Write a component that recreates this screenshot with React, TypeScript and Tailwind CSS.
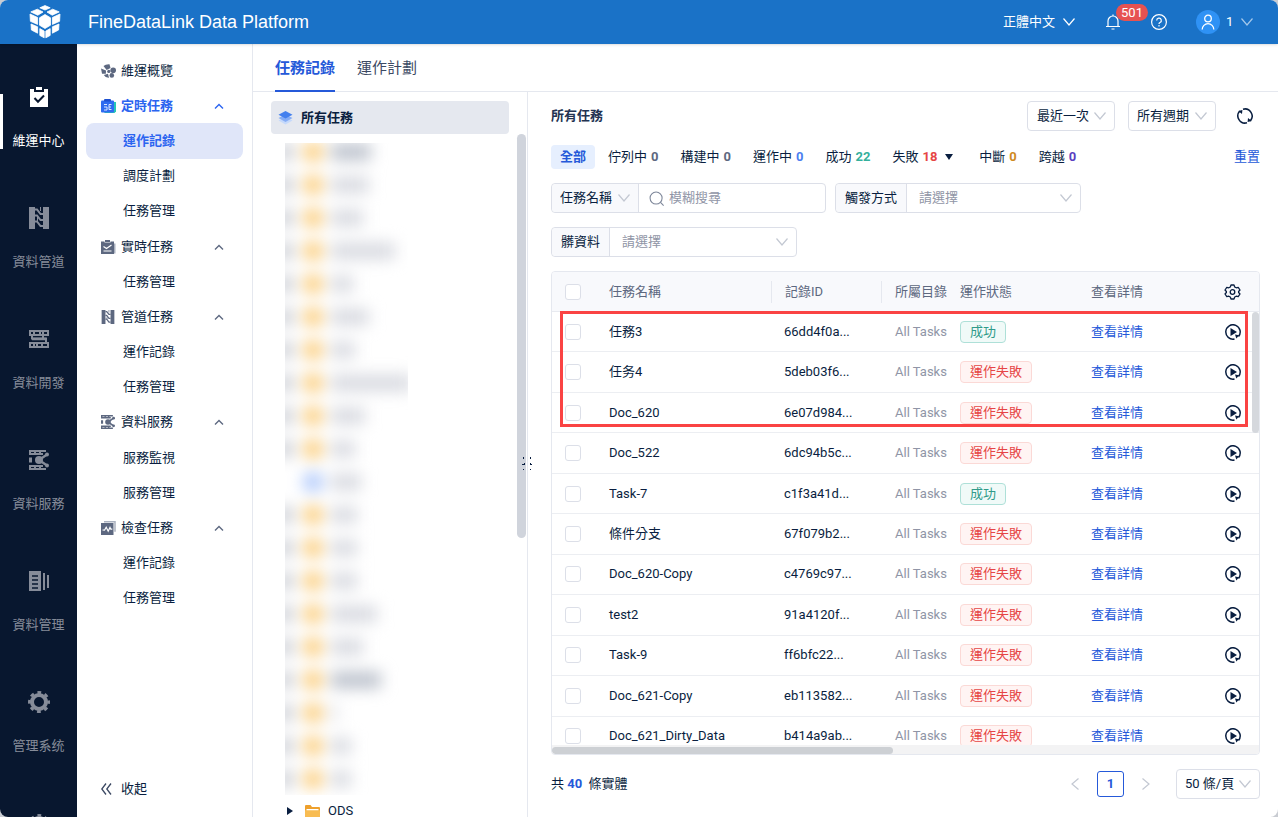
import { useState } from "react";
import type { ReactNode } from "react";

type MenuItem = { label: string; icon?: ReactNode; child?: boolean; group?: boolean };

const RED = "text-[#e64545]";

function Chevron({ className = "", up = false }: { className?: string; up?: boolean }) {
  return (
    <svg width="12" height="8" viewBox="0 0 12 8" fill="none" stroke="currentColor" className={className}>
      <path d={up ? "M2 6.5 6 2.5l4 4" : "M.5.5 6 7l5.5-6.5"} strokeWidth={up ? 1.4 : 1.2} />
    </svg>
  );
}

function Logo() {
  return (
    <svg width="32" height="34" viewBox="0 0 32 34" fill="#fff" stroke="#fff" strokeWidth=".8" strokeLinejoin="round">
      <path d="M16 .6 21.2 2.800 16 5 10.800 2.800z" />
      <path d="M16 9.500 21.500 12.800v7.400L16 23.500l-5.500-3.300v-7.400z" />
      <path d="M8.300 4.200 14 7 8.800 10.200 1.800 6.900z" />
      <path d="M23.700 4.200 18 7l5.200 3.200 7-3.300z" />
      <path d="M1 9 8.600 12.500v6.900L1.400 16.300z" />
      <path d="M31 9l-7.600 3.500v6.900l7.200-3.100z" />
      <path d="M2 19 8.600 21.800v6.400L2.400 25z" />
      <path d="M30 19l-6.600 2.800v6.400l6.200-3.200z" />
      <path d="m10.800 23.600 4.400 2.500v6.700l-4.400-2.400z" />
      <path d="m21.200 23.600-4.400 2.500v6.700l4.400-2.400z" />
    </svg>
  );
}

function OpsIcon() {
  return (
    <svg width="18" height="20" viewBox="0 0 18 20">
      <path fill="currentColor" d="M0 2h4v3h10V2h4v18H0zM6 0h6v3H6z" />
      <path d="m4.500 11 3.500 3.800 6-6.300" fill="none" stroke="#08172f" strokeWidth="2" />
    </svg>
  );
}

function PipeIcon({ size = 22 }: { size?: number }) {
  return (
    <svg width={size} height={size} viewBox="0 0 22 22" fill="currentColor">
      <path d="M1 0h6v22H1zM15 0h6v22h-6z" />
      <path
        d="M7 2.500h2L12.500 7H15M7 8.500h2l3.500 4.500H15M7 14.500h2l3.500 4.500H15"
        fill="none"
        stroke="currentColor"
        strokeWidth="2"
      />
      <path d="M12 0h1v4h-1zM9 10h1v4H9z" />
    </svg>
  );
}

function DevIcon() {
  return (
    <svg width="20" height="18" viewBox="0 0 20 18" fill="none" stroke="currentColor" strokeWidth="2">
      <path d="M1 1h18v4H1zM1 13h18v4H1z" />
      <path d="M3 5v3.500h14V13M5 1v4M11 1v4M14 1v7M5 13v4M8 13v4M13 13v4" />
      <path d="M3 9h14" strokeWidth="2.500" />
    </svg>
  );
}

function ServiceIcon({ size = 20 }: { size?: number }) {
  return (
    <svg width={size} height={size} viewBox="0 0 20 20" fill="none" stroke="currentColor" strokeWidth="2">
      <path d="M17 1H1v3h13M17 19H1v-3h13M6 1v3M11 1v3M6 16v3M11 16v3" />
      <path d="m10 10 8-5.500M10 10l8 5.500" strokeWidth="2.400" />
      <circle cx="10" cy="10" r="4" fill="currentColor" stroke="none" />
      <circle cx="18" cy="4.500" r="2" fill="currentColor" stroke="none" />
      <circle cx="18" cy="15.500" r="2" fill="currentColor" stroke="none" />
      <path d="M0 10h3" strokeWidth="5" />
    </svg>
  );
}

function ManageIcon() {
  return (
    <svg width="20" height="20" viewBox="0 0 20 20">
      <path d="M0 0h12v20H0zM14 2h2v17h-2zM18 4h2v13h-2z" fill="currentColor" />
      <path d="M3 5h6M3 9h6M3 13h6M3 17h6" stroke="#08172f" strokeWidth="1.600" />
    </svg>
  );
}

function GearIcon() {
  return (
    <svg width="22" height="22" viewBox="0 0 22 22" fill="none" stroke="currentColor">
      <circle cx="11" cy="11" r="7" strokeWidth="4" />
      <circle cx="11" cy="11" r="9.600" strokeWidth="2.800" strokeDasharray="3.77 3.77" strokeDashoffset="1.88" />
    </svg>
  );
}

function OverviewIcon() {
  return (
    <svg width="15" height="14" viewBox="0 0 15 14" fill="#5d6880">
      <path d="M2.500 2Q4.500 0 8.500.2L9.500 4 5.600 6z" />
      <circle cx="12.200" cy="6.200" r="2.800" />
      <path d="M0 4.600 5 6.500l-.2 3.200L1 9.800z" />
      <circle cx="7.800" cy="7.400" r="1.600" />
      <path d="M2.800 11 7 9.800l1 4Q4.500 14 2.800 11z" />
      <circle cx="10.800" cy="11.400" r="2.300" />
    </svg>
  );
}

function ScheduledIcon() {
  return (
    <svg width="15" height="14" viewBox="0 0 15 14">
      <path d="M12 3h3v9.500L13.500 14H3z" fill="#25c7b7" />
      <rect y="1.500" width="13" height="12" rx="1" fill="#2f6bf0" />
      <rect x="3" width="7" height="2.600" rx="1" fill="#1e50d0" />
      <path d="M3 5.500h3M3 8h3v3H3M10.500 5.500H8v5h2.500M8 8h2" stroke="#dbe7ff" fill="none" />
    </svg>
  );
}

function RealtimeIcon() {
  return (
    <svg width="15" height="14" viewBox="0 0 15 14">
      <path d="M13.500 3.500v10" stroke="#aab1bf" strokeWidth="2" />
      <path d="M0 1.500h3.500v1h6v-1H13V14H0z" fill="#5d6880" />
      <path d="M4 0h5v2H4z" fill="#5d6880" />
      <path d="m2.500 6.500 3 2L10.500 5M2.500 11h8" stroke="#fff" strokeWidth="1.200" fill="none" />
    </svg>
  );
}

function InspectIcon() {
  return (
    <svg width="15" height="14" viewBox="0 0 15 14">
      <path d="M3 .8h11v10" fill="none" stroke="#aab1bf" strokeWidth="1.500" />
      <path d="M0 2h12.500v12H0z" fill="#5d6880" />
      <path d="m1.500 9 2 .2 1.700-3 2 4L9 6.500l.8 1.700h1.500" stroke="#fff" strokeWidth="1.200" fill="none" />
    </svg>
  );
}

function LayersIcon() {
  return (
    <svg width="15" height="14" viewBox="0 0 15 14">
      <path d="m7.500 6 7 3.500-7 4-7-4z" fill="#c5d9fb" />
      <path d="m7.500 3.500 7 3.500-7 4-7-4z" fill="#86adf5" />
      <path d="m7.500 0 7 3.700-7 3.800-7-3.800z" fill="#4480ee" />
    </svg>
  );
}

function FolderIcon() {
  return (
    <svg width="15" height="13" viewBox="0 0 15 13">
      <path d="M0 1.200Q0 0 1 0h4.500L7 2h7q1 0 1 1v3H0z" fill="#eea02c" />
      <path d="M1.500 4h12v2h-12z" fill="#fff" />
      <path d="M0 5.200h15V12q0 1-1 1H1q-1 0-1-1z" fill="#f8bc52" />
    </svg>
  );
}

function BellIcon() {
  return (
    <svg width="16" height="16" viewBox="0 0 16 16" fill="none" stroke="currentColor" strokeWidth="1.200">
      <path d="M1 12.500h14M3 12.500V7a5 5 0 0 1 10 0v5.500M8 .5V2M6.500 15h3" />
    </svg>
  );
}

function RefreshIcon() {
  return (
    <svg width="16" height="16" viewBox="0 0 16 16" fill="none" stroke="#091e40" strokeWidth="1.500">
      <path d="M10 14.800A7.200 7.200 0 0 1 2.800 3M6 1.200A7.200 7.200 0 0 1 13.200 13" />
      <path d="m1.200 3 4.200-1-.4 4zM14.800 13l-4.200 1 .4-4z" fill="#091e40" stroke="none" />
    </svg>
  );
}

function RunIcon() {
  return (
    <svg width="16" height="16" viewBox="0 0 16 16" fill="none" stroke="#091e40" strokeWidth="1.500">
      <path d="M9.500 15A7.200 7.200 0 1 1 13.500 12.600" />
      <path d="M5.500 4v8L12 8z" fill="#091e40" stroke="none" />
      <path d="m10 10.500 4.200.8-2.900 3.200z" fill="#091e40" stroke="none" />
    </svg>
  );
}

function SettingIcon() {
  return (
    <svg width="17" height="16" viewBox="0 0 17 16" fill="none" stroke="#091e40" strokeWidth="1.300" strokeLinejoin="round">
      <path d="M7 1h3l.7 2 1.500.8 2-.4L16 6l-1.400 1.500v1L16 10l-1.800 2.600-2-.4-1.500.8-.7 2H7l-.7-2-1.500-.8-2 .4L1 10l1.400-1.500v-1L1 6l1.800-2.600 2 .4L6.300 3z" />
      <circle cx="8.500" cy="8" r="2.300" />
    </svg>
  );
}

const rail = [
  { label: "維運中心", icon: <OpsIcon /> },
  { label: "資料管道", icon: <PipeIcon /> },
  { label: "資料開發", icon: <DevIcon /> },
  { label: "資料服務", icon: <ServiceIcon /> },
  { label: "資料管理", icon: <ManageIcon /> },
  { label: "管理系统", icon: <GearIcon /> },
];

const menu: MenuItem[] = [
  { label: "維運概覽", icon: <OverviewIcon /> },
  { label: "定時任務", icon: <ScheduledIcon />, group: true },
  { label: "運作記錄", child: true },
  { label: "調度計劃", child: true },
  { label: "任務管理", child: true },
  { label: "實時任務", icon: <RealtimeIcon />, group: true },
  { label: "任務管理", child: true },
  { label: "管道任務", icon: <PipeIcon size={14} />, group: true },
  { label: "運作記錄", child: true },
  { label: "任務管理", child: true },
  { label: "資料服務", icon: <ServiceIcon size={14} />, group: true },
  { label: "服務監視", child: true },
  { label: "服務管理", child: true },
  { label: "檢查任務", icon: <InspectIcon />, group: true },
  { label: "運作記錄", child: true },
  { label: "任務管理", child: true },
];

// widths of the masked folder names
const masked = [40, 38, 32, 64, 22, 38, 24, 80, 34, 24, 30, 26, 26, 26, 46, 32, 50, 6, 20, 20];

const filters = [
  { label: "佇列中", count: 0, color: "text-[#5d6880]" },
  { label: "構建中", count: 0, color: "text-[#5d6880]" },
  { label: "運作中", count: 0, color: "text-[#4c7ff0]" },
  { label: "成功", count: 22, color: "text-[#35b09c]" },
  { label: "失敗", count: 18, color: RED, more: true },
  { label: "中斷", count: 0, color: "text-[#cf8a1e]" },
  { label: "跨越", count: 0, color: "text-[#5a3fc0]" },
];

const rows = [
  { name: "任務3", id: "66dd4f0a...", ok: true },
  { name: "任务4", id: "5deb03f6...", ok: false },
  { name: "Doc_620", id: "6e07d984...", ok: false },
  { name: "Doc_522", id: "6dc94b5c...", ok: false },
  { name: "Task-7", id: "c1f3a41d...", ok: true },
  { name: "條件分支", id: "67f079b2...", ok: false },
  { name: "Doc_620-Copy", id: "c4769c97...", ok: false },
  { name: "test2", id: "91a4120f...", ok: false },
  { name: "Task-9", id: "ff6bfc22...", ok: false },
  { name: "Doc_621-Copy", id: "eb113582...", ok: false },
  { name: "Doc_621_Dirty_Data", id: "b414a9ab...", ok: false },
];

function Select({ label, text, className = "" }: { label: string; text: string; className?: string }) {
  return (
    <div className={`relative flex items-center ${className}`}>
      <select aria-label={label} className="h-full w-full appearance-none rounded bg-transparent outline-none">
        <option>{text}</option>
      </select>
      <Chevron className="pointer-events-none absolute right-2 text-[#c3c8d2]" />
    </div>
  );
}

function LabelledSelect({ id, label, width }: { id: string; label: string; width: string }) {
  return (
    <div className={`flex h-[30px] rounded border border-[#dcdfe8] ${width}`}>
      <label htmlFor={id} className="flex items-center rounded-l border-r border-[#dcdfe8] bg-[#f8f9fc] px-[9px]">
        {label}
      </label>
      <div className="relative flex flex-1 items-center">
        <select id={id} className="h-full w-full appearance-none bg-transparent pl-3 text-[#9095a6] outline-none">
          <option>請選擇</option>
        </select>
        <Chevron className="pointer-events-none absolute right-2 text-[#c3c8d2]" />
      </div>
    </div>
  );
}

function Checkbox({ label }: { label: string }) {
  return (
    <input
      type="checkbox"
      aria-label={label}
      className="block size-4 appearance-none rounded-[3px] border border-[#dcdfe8] bg-white checked:bg-[#2559d9]"
    />
  );
}

function Header() {
  return (
    <header className="relative z-10 flex h-11 shrink-0 items-center bg-[#1a72c7] pr-[25px] pl-[29px] text-white shadow-sm">
      <Logo />
      <h1 className="ml-[27px] font-['Liberation_Sans',sans-serif] text-lg">FineDataLink Data Platform</h1>
      <div className="ml-auto flex items-center">
        <button type="button" className="flex items-center gap-2">
          正體中文
          <Chevron />
        </button>
        <button type="button" aria-label="notifications" className="relative ml-[30px]">
          <BellIcon />
          <span className="absolute -top-2.5 left-[11px] h-[17px] w-8 rounded-full bg-[#e65251] text-center leading-[17px]">
            501
          </span>
        </button>
        <button type="button" aria-label="help" className="ml-[30px]">
          <svg width="16" height="16" viewBox="0 0 16 16" fill="none" stroke="currentColor" strokeWidth="1.200">
            <circle cx="8" cy="8" r="7.400" />
            <path d="M5.700 6.500a2.300 2.300 0 1 1 3.300 2q-1 .5-1 1.500M8 11v1.500" />
          </svg>
        </button>
        <button type="button" className="ml-[29px] flex items-center">
          <span className="flex size-6 items-center justify-center rounded-full bg-[#2f92f5]">
            <svg width="14" height="16" viewBox="0 0 14 16" fill="none" stroke="currentColor" strokeWidth="1.300">
              <circle cx="7" cy="4.500" r="3.300" />
              <path d="M1.200 15.500a5.800 5.800 0 0 1 11.600 0" />
            </svg>
          </span>
          <span className="ml-1.5 w-[15px] text-left">1</span>
          <Chevron className="text-[#a3c7ea]" />
        </button>
      </div>
    </header>
  );
}

function Rail() {
  return (
    <nav className="w-[77px] shrink-0 overflow-hidden bg-[#08172f] pt-[17px]">
      {rail.map((r, i) => (
        <a
          key={r.label}
          href="#"
          className={`relative flex h-[121px] flex-col items-center pt-6 ${i === 0 ? "text-white" : "text-[#868c99]"}`}
        >
          {i === 0 && <span className="absolute top-[33px] left-0 h-[55px] w-[3px] bg-white" />}
          <span className="flex h-6 items-center">{r.icon}</span>
          <span className="mt-[22px]">{r.label}</span>
        </a>
      ))}
      <a href="#" aria-label="more" className="flex justify-center pt-[27px] text-[#868c99]">
        <GearIcon />
      </a>
    </nav>
  );
}

function SideMenu() {
  return (
    <nav className="flex w-44 shrink-0 flex-col border-r border-[#e5e8ef]">
      <ul className="grid h-[572px] auto-rows-fr px-[9px] pt-[9px]">
        {menu.map((m, i) => (
          <li key={i}>
            <a
              href="#"
              className={`flex h-full items-center rounded-lg ${m.child ? "pl-[37px]" : "gap-[5px] pl-[15px]"} ${
                i === 1 ? "font-bold text-[#2b64f0]" : i === 2 ? "bg-[#e0e6f9] font-bold text-[#2b64f0]" : ""
              }`}
            >
              {m.icon && <span className={`w-[15px] ${i === 1 ? "" : "text-[#5d6880]"}`}>{m.icon}</span>}
              {m.label}
              {m.group && <Chevron up className={`mr-[18px] ml-auto ${i === 1 ? "" : "text-[#5d6880]"}`} />}
            </a>
          </li>
        ))}
      </ul>
      <button type="button" className="mt-auto mb-[18px] ml-6 flex items-center gap-[9px]">
        <svg width="11" height="12" viewBox="0 0 11 12" fill="none" stroke="#3c4963" strokeWidth="1.300">
          <path d="M5 .5.800 6 5 11.500M10 .5 5.800 6l4.200 5.500" />
        </svg>
        收起
      </button>
    </nav>
  );
}

function TaskTree() {
  return (
    <aside className="relative w-[275px] shrink-0 overflow-hidden border-r border-[#e5e8ef] pt-[9px]">
      <button
        type="button"
        className="ml-[18px] flex h-[33px] w-[238px] items-center gap-2 rounded bg-[#e5e8ef] pl-[7px] font-bold"
      >
        <LayersIcon />
        所有任務
      </button>
      <div className="mt-[9px] ml-8 h-[652px] w-[123px] overflow-hidden">
        <div className="-mt-2 blur-[8px]">
          {masked.map((w, i) => (
            <div key={i} className="flex h-[33px] items-center">
              <span className={`-ml-2 h-4 w-4 shrink-0 ${i === 10 ? "" : "bg-[#c5c8d0]"}`} />
              <span className={`ml-2.5 size-5 shrink-0 rounded-full ${i === 10 ? "bg-[#a9c4fb]" : "bg-[#fbca74]"}`} />
              <span
                className={`ml-2 h-4 shrink-0 ${i === 0 || i === 16 ? "bg-[#b9bfca]" : "bg-[#d6d8df]"}`}
                style={{ width: w }}
              />
            </div>
          ))}
        </div>
      </div>
      <div className="flex h-8 items-center pl-[34px]">
        <svg width="6" height="8" viewBox="0 0 6 8">
          <path d="M0 0v8l6-4z" fill="#091e40" />
        </svg>
        <span className="mr-2 ml-3">
          <FolderIcon />
        </span>
        ODS
      </div>
      <div className="absolute top-[42px] right-px h-[404px] w-[9px] rounded-full bg-[#d0d4dc]" />
    </aside>
  );
}

function RecordTable() {
  return (
    <div className="relative h-[484px] shrink-0 overflow-hidden rounded border border-[#e5e8ef]">
      <table className="h-[485px] w-full table-fixed border-separate border-spacing-0 text-left">
        <colgroup>
          <col className="w-[57px]" />
          <col />
          <col className="w-[110px]" />
          <col className="w-[78px]" />
          <col className="w-[131px]" />
          <col className="w-[121px]" />
          <col className="w-[47px]" />
        </colgroup>
        <thead className="bg-[#f8f9fc] text-[#5d6880]">
          <tr className="*:h-10 *:border-b *:border-[#e8eaf0] *:p-0 *:font-normal">
            <th>
              <div className="pl-[13px]">
                <Checkbox label="all" />
              </div>
            </th>
            <th>
              <div className="flex h-[22px] items-center border-r border-[#e5e8ef]">任務名稱</div>
            </th>
            <th>
              <div className="flex h-[22px] items-center border-r border-[#e5e8ef] pl-[13px]">記錄ID</div>
            </th>
            <th>
              <div className="pl-[13px]">所屬目錄</div>
            </th>
            <th>運作狀態</th>
            <th>查看詳情</th>
            <th>
              <button type="button" aria-label="columns" className="ml-3 block">
                <SettingIcon />
              </button>
            </th>
          </tr>
        </thead>
        <tbody>
          {rows.map((r) => (
            <tr key={r.id} className="*:h-10 *:border-b *:border-[#eceef2] *:p-0">
              <td>
                <div className="pl-[13px]">
                  <Checkbox label={r.name} />
                </div>
              </td>
              <td>{r.name}</td>
              <td>
                <div className="pl-3">{r.id}</div>
              </td>
              <td>
                <div className="pl-[13px] whitespace-nowrap text-[#9095a6]">All Tasks</div>
              </td>
              <td>
                <span
                  className={`inline-flex h-[22px] items-center rounded border px-[9px] ${
                    r.ok ? "border-[#aee0d8] bg-[#f0faf8] text-[#2f9b8a]" : `border-[#fbd9d6] bg-[#fff4f3] ${RED}`
                  }`}
                >
                  {r.ok ? "成功" : "運作失敗"}
                </span>
              </td>
              <td>
                <a href="#" className="text-[#2559d9]">
                  查看詳情
                </a>
              </td>
              <td>
                <button type="button" aria-label="run" className="ml-[13px] block">
                  <RunIcon />
                </button>
              </td>
            </tr>
          ))}
        </tbody>
      </table>
      <div className="absolute inset-x-0 bottom-0 h-[9px] bg-[#f3f3f4]">
        <div className="mt-0.5 h-[7px] w-[341px] rounded-full bg-[#cdd0d4]" />
      </div>
      <div className="absolute top-10 right-0 h-[121px] w-[7px] rounded-full bg-[#d5d8dd]" />
      <div className="pointer-events-none absolute top-[39px] right-[11px] left-2 h-[116px] border-[3px] border-[#fa4343]" />
    </div>
  );
}

export default function App() {
  const [query, setQuery] = useState("");

  return (
    <div className="h-screen bg-[#c9ccd2]">
      <div className="flex h-full flex-col overflow-hidden rounded-lg bg-white font-[Roboto,'Noto_Sans_CJK_TC',sans-serif] text-[13px] leading-5 text-[#091e40]">
        <Header />
        <div className="flex min-h-0 flex-1">
          <Rail />
          <SideMenu />
          <div className="flex min-w-0 flex-1 flex-col">
            <div className="flex h-12 shrink-0 gap-[22px] border-b border-[#e5e8ef] pl-[22px] text-[15px]">
              <button type="button" className="h-12 border-b-2 border-[#2559d9] pt-0.5 font-bold text-[#2559d9]">
                任務記錄
              </button>
              <button type="button" className="h-12 border-b-2 border-transparent pt-0.5 text-[#3c4963]">
                運作計劃
              </button>
            </div>
            <div className="flex min-h-0 flex-1">
              <TaskTree />
              <main className="relative flex min-w-0 flex-1 flex-col gap-3.5 pt-[9px] pr-[18px] pl-[23px]">
                <svg width="11" height="16" viewBox="0 0 11 16" fill="#091e40" className="absolute top-[364px] -left-1.5">
                  <path d="M1 1h1v2H1zM8 1h1v2H8zM0 8h2V7h1v2H0zM8 7h1v1h1v1H8zM1 13h1v1H1zM8 13h1v1H8z" />
                </svg>
                <div className="flex h-[30px] items-center">
                  <h2 className="font-bold text-[#233352]">所有任務</h2>
                  <Select
                    label="記錄"
                    text="最近一次"
                    className="ml-auto h-[30px] w-[88px] rounded border border-[#dcdfe8] pl-[9px]"
                  />
                  <Select
                    label="週期"
                    text="所有週期"
                    className="ml-[13px] h-[30px] w-[88px] rounded border border-[#dcdfe8] pl-2"
                  />
                  <button type="button" aria-label="refresh" className="mr-[7px] ml-[21px]">
                    <RefreshIcon />
                  </button>
                </div>
                <div className="flex h-6 items-center gap-1">
                  <button type="button" className="h-6 rounded bg-[#e6effe] px-[9px] font-bold text-[#2559d9]">
                    全部
                  </button>
                  {filters.map((f) => (
                    <button key={f.label} type="button" className="flex h-6 items-center gap-1 px-[9px]">
                      {f.label}
                      <span className={`font-bold ${f.color}`}>{f.count}</span>
                      {f.more && (
                        <svg width="12" height="6" viewBox="0 0 12 6" className="ml-1">
                          <path d="M0 0h8L4 6z" fill="#091e40" />
                        </svg>
                      )}
                    </button>
                  ))}
                  <button type="button" className="ml-auto text-[#2559d9]">
                    重置
                  </button>
                </div>
                <div className="flex flex-wrap gap-x-[9px] gap-y-3.5">
                  <div className="flex h-[30px] w-[275px] rounded border border-[#dcdfe8]">
                    <Select
                      label="欄位"
                      text="任務名稱"
                      className="w-[87px] rounded-l border-r border-[#dcdfe8] bg-[#f8f9fc] pl-2"
                    />
                    <label className="flex min-w-0 flex-1 items-center gap-[5px] pl-2.5">
                      <svg width="17" height="17" viewBox="0 0 17 17" fill="none" stroke="#7d8699" strokeWidth="1.200">
                        <circle cx="8" cy="8" r="6.800" />
                        <path d="m13 13 3.500 3.500" />
                      </svg>
                      <input
                        value={query}
                        onChange={(e) => setQuery(e.target.value)}
                        placeholder="模糊搜尋"
                        className="w-full min-w-0 outline-none placeholder:text-[#9095a6]"
                      />
                    </label>
                  </div>
                  <LabelledSelect id="trigger" label="觸發方式" width="w-[246px]" />
                  <LabelledSelect id="dirty" label="髒資料" width="w-[246px]" />
                </div>
                <RecordTable />
                <div className="flex h-[30px] items-center">
                  <span>
                    共 <b className="text-[#2559d9]">40</b>&nbsp; 條實體
                  </span>
                  <button type="button" aria-label="previous" className="ml-auto rotate-90 text-[#c3c8d2]">
                    <Chevron />
                  </button>
                  <button
                    type="button"
                    className="mx-4 h-[26px] w-[27px] rounded-[3px] border border-[#2559d9] font-bold text-[#2559d9]"
                  >
                    1
                  </button>
                  <button type="button" aria-label="next" className="-rotate-90 text-[#c3c8d2]">
                    <Chevron />
                  </button>
                  <Select
                    label="每頁"
                    text="50 條/頁"
                    className="ml-6 h-[30px] w-[84px] rounded border border-[#dcdfe8] pl-2"
                  />
                </div>
              </main>
            </div>
          </div>
        </div>
      </div>
    </div>
  );
}
